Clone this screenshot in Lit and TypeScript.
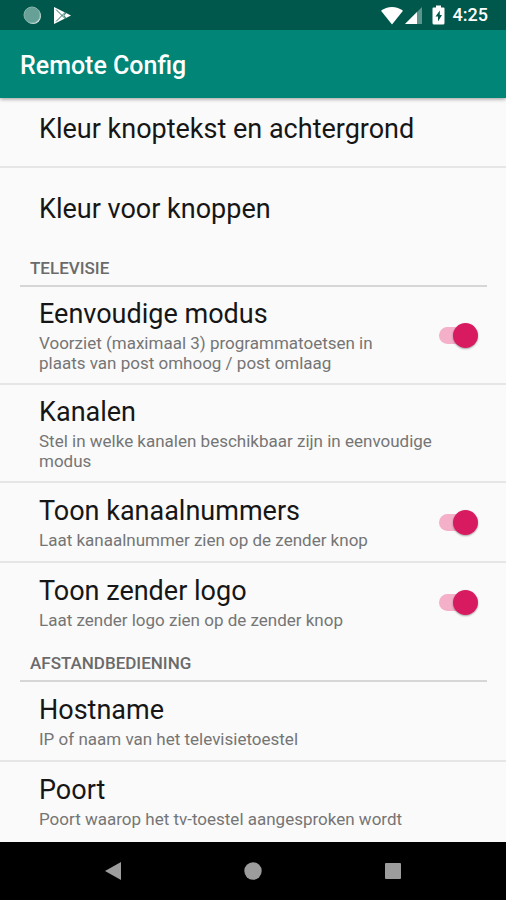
import { LitElement, html, css, nothing } from "lit";
import { customElement, property, state } from "lit/decorators.js";
import { classMap } from "lit/directives/class-map.js";

interface Setting {
  id: string;
  title: string;
  summary?: string;
  toggle?: boolean;
}

interface Section {
  heading?: string;
  items: Setting[];
}

const SECTIONS: Section[] = [
  {
    items: [
      { id: "text-color", title: "Kleur knoptekst en achtergrond" },
      { id: "button-color", title: "Kleur voor knoppen" },
    ],
  },
  {
    heading: "Televisie",
    items: [
      {
        id: "simple-mode",
        title: "Eenvoudige modus",
        summary:
          "Voorziet (maximaal 3) programmatoetsen in plaats van post omhoog / post omlaag",
        toggle: true,
      },
      {
        id: "channels",
        title: "Kanalen",
        summary: "Stel in welke kanalen beschikbaar zijn in eenvoudige modus",
      },
      {
        id: "channel-numbers",
        title: "Toon kanaalnummers",
        summary: "Laat kanaalnummer zien op de zender knop",
        toggle: true,
      },
      {
        id: "channel-logo",
        title: "Toon zender logo",
        summary: "Laat zender logo zien op de zender knop",
        toggle: true,
      },
    ],
  },
  {
    heading: "Afstandbediening",
    items: [
      {
        id: "hostname",
        title: "Hostname",
        summary: "IP of naam van het televisietoestel",
      },
      {
        id: "port",
        title: "Poort",
        summary: "Poort waarop het tv-toestel aangesproken wordt",
      },
    ],
  },
];

@customElement("status-bar")
export class StatusBar extends LitElement {
  static styles = css`
    :host {
      display: flex;
      align-items: center;
      justify-content: space-between;
      height: 30px;
      padding: 0 18px 0 23px;
      background: #00574b;
      color: #fff;
    }
    .group {
      display: flex;
      align-items: center;
    }
    .notices {
      gap: 10px;
    }
    .time {
      font-size: 18px;
      line-height: 20px;
      font-weight: 500;
    }
    svg {
      display: block;
    }
  `;

  render() {
    return html`
      <div class="group notices">
        <svg width="19" height="19" viewBox="0 0 19 19" aria-hidden="true">
          <circle cx="10" cy="10" r="8" fill="#d5e5e2" />
          <circle cx="9" cy="9" r="8" fill="#66a096" stroke="#86b4ac" />
        </svg>
        <svg width="20" height="19" viewBox="0 0 20 19" aria-hidden="true">
          <path d="M2 1L19 9.500L2 18Z" fill="#fff" />
          <path d="M4 3.500L13.500 13M4 15.500L13.500 6M14 6.500L12 9.500L14 12.500" fill="none" stroke="#2d7268" stroke-width="1" />
        </svg>
      </div>
      <div class="group">
        <svg width="22" height="19" viewBox="0 0 22 19" aria-hidden="true">
          <path d="M11 18.500L0 4.800C6 -.4 16 -.4 22 4.800Z" fill="#fff" />
        </svg>
        <svg width="20" height="19" viewBox="0 0 20 19" aria-hidden="true">
          <path d="M19 1V18H2Z" fill="#5d948b" />
          <path d="M14 6V18H2Z" fill="#fff" />
        </svg>
        <svg width="30" height="20" viewBox="0 0 30 20" aria-hidden="true">
          <path d="M13 .5h5v2h2.500q1 0 1 1V18q0 1.500-1.500 1.500h-9Q9.500 19.500 9.500 18V3.500q0-1 1-1H13Z" fill="#fff" />
          <path d="M16.800 5.500L12.500 11.500H15V16.500L19 10H16.800Z" fill="#00574b" />
        </svg>
        <span class="time">4:25</span>
      </div>
    `;
  }
}

@customElement("setting-row")
export class SettingRow extends LitElement {
  @property({ attribute: false }) item!: Setting;
  @state() private on = true;

  static styles = css`
    :host {
      display: block;
    }
    .row {
      box-sizing: border-box;
      display: flex;
      align-items: center;
      gap: 20px;
      width: 100%;
      min-height: 78px;
      margin: 0;
      padding: 10px 28px 10px 39px;
      border: 0;
      background: none;
      font: inherit;
      color: inherit;
      text-align: left;
      cursor: pointer;
    }
    .single {
      padding-top: 14px;
    }
    .text {
      flex: 1;
      display: flex;
      flex-direction: column;
      gap: 2px;
      min-width: 0;
    }
    .title {
      font-size: 27px;
      line-height: 34px;
      color: #161616;
    }
    .summary {
      font-size: 17px;
      line-height: 20px;
      color: #757575;
    }
    .switch {
      appearance: none;
      flex: none;
      display: grid;
      align-items: center;
      width: 39px;
      height: 25px;
      margin: 0;
      cursor: pointer;
    }
    .switch::before,
    .switch::after {
      content: "";
      grid-area: 1 / 1;
    }
    .switch::before {
      width: 34px;
      height: 17px;
      border-radius: 9px;
      background: #c4c4c4;
    }
    .switch::after {
      width: 25px;
      height: 25px;
      border-radius: 50%;
      background: #fafafa;
      box-shadow: 0 1px 2px rgba(0, 0, 0, 0.35);
    }
    .switch:checked::before {
      background: #f3b0c8;
    }
    .switch:checked::after {
      justify-self: end;
      background: #d81b60;
    }
  `;

  private text() {
    return html`<span class="text">
      <span class="title">${this.item.title}</span>
      ${this.item.summary
        ? html`<span class="summary">${this.item.summary}</span>`
        : nothing}
    </span>`;
  }

  private toggled(e: Event) {
    this.on = (e.target as HTMLInputElement).checked;
  }

  render() {
    const classes = classMap({ row: true, single: !this.item.summary });
    return this.item.toggle
      ? html`<label class=${classes} for="toggle">
          ${this.text()}
          <input
            id="toggle"
            class="switch"
            type="checkbox"
            role="switch"
            .checked=${this.on}
            @change=${this.toggled}
          />
        </label>`
      : html`<button class=${classes} type="button">${this.text()}</button>`;
  }
}

@customElement("nav-bar")
export class NavBar extends LitElement {
  static styles = css`
    :host {
      display: flex;
      justify-content: center;
      gap: 92px;
      height: 58px;
      background: #000;
    }
    .key {
      display: grid;
      place-items: center;
      width: 48px;
      padding: 0;
      border: 0;
      background: none;
      cursor: pointer;
    }
  `;

  render() {
    return html`
      <button class="key" type="button" aria-label="Terug">
        <svg width="18" height="18" viewBox="0 0 18 18" fill="#9c9c9c">
          <path d="M1 9L17 0V18Z" />
        </svg>
      </button>
      <button class="key" type="button" aria-label="Startscherm">
        <svg width="18" height="18" viewBox="0 0 18 18" fill="#9c9c9c">
          <circle cx="9" cy="9" r="8.700" />
        </svg>
      </button>
      <button class="key" type="button" aria-label="Recente apps">
        <svg width="18" height="18" viewBox="0 0 18 18" fill="#9c9c9c">
          <rect x="1" y="1" width="16" height="16" rx="1" />
        </svg>
      </button>
    `;
  }
}

@customElement("app-root")
export class AppRoot extends LitElement {
  static styles = css`
    :host {
      display: flex;
      flex-direction: column;
      min-height: 100vh;
      background: #fafafa;
      font-family: Roboto, "Liberation Sans", sans-serif;
    }
    .top {
      position: sticky;
      top: 0;
      z-index: 1;
      box-shadow: 0 1px 4px rgba(0, 0, 0, 0.4);
    }
    .toolbar {
      display: flex;
      align-items: center;
      height: 68px;
      padding: 4px 20px 0;
      box-sizing: border-box;
      background: #008577;
    }
    .app-title {
      margin: 0;
      font-size: 25px;
      line-height: 32px;
      font-weight: 500;
      color: #fff;
    }
    /* The list is scrolled a little way under the toolbar. */
    .list {
      flex: 1;
      margin-top: -10px;
    }
    .items {
      margin: 0;
      padding: 0;
      list-style: none;
    }
    .item + .item {
      border-top: 2px solid #e6e6e6;
    }
    .heading {
      box-sizing: border-box;
      height: 41px;
      margin: 0 19px 0 20px;
      padding: 12px 10px 0;
      border-bottom: 2px solid #d6d6d6;
      font-size: 17px;
      line-height: 20px;
      font-weight: 500;
      text-transform: uppercase;
      color: #6a6a6a;
    }
  `;

  render() {
    return html`
      <header class="top">
        <status-bar></status-bar>
        <div class="toolbar"><h1 class="app-title">Remote Config</h1></div>
      </header>
      <main class="list">
        ${SECTIONS.map(
          (section) => html`
            <section>
              ${section.heading
                ? html`<h2 class="heading">${section.heading}</h2>`
                : nothing}
              <ul class="items">
                ${section.items.map(
                  (item) => html`<li class="item">
                    <setting-row .item=${item}></setting-row>
                  </li>`
                )}
              </ul>
            </section>
          `
        )}
      </main>
      <nav-bar></nav-bar>
    `;
  }
}
